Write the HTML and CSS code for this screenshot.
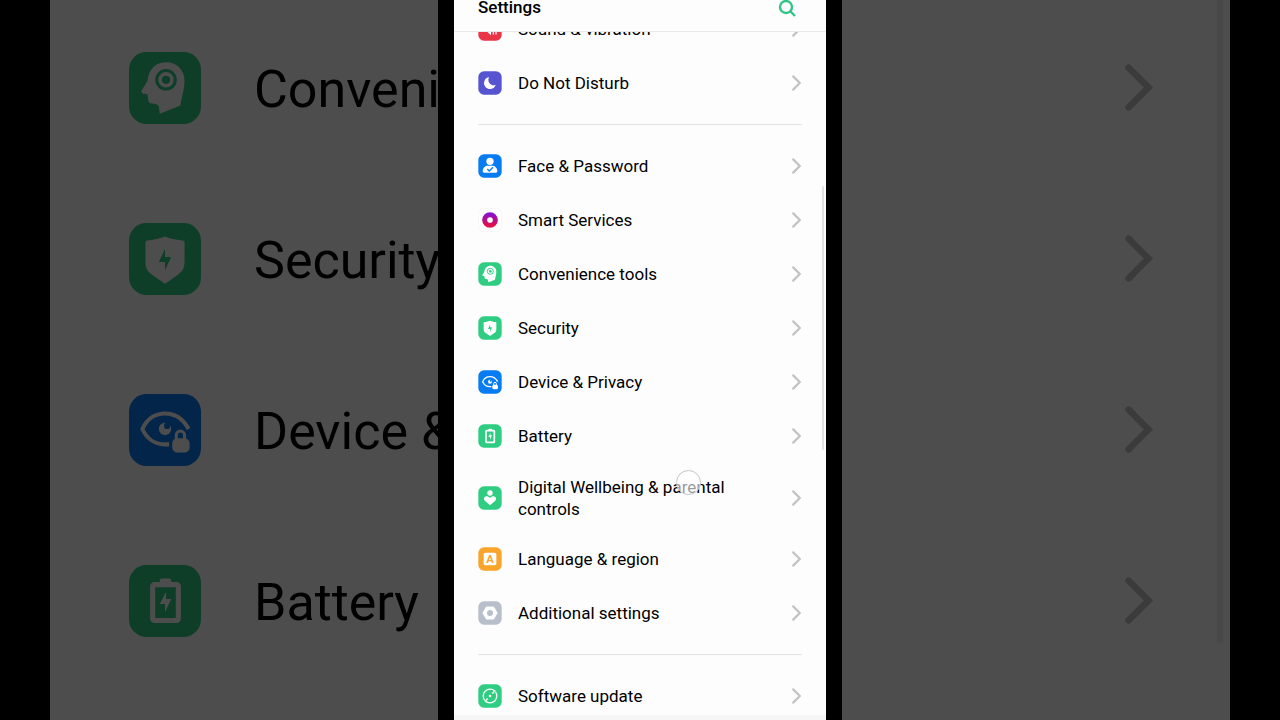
FILE: index.html
```html
<!DOCTYPE html>
<html lang="en">
<head>
    <meta charset="UTF-8">
    <meta name="viewport" content="width=device-width, initial-scale=1.0">
    <title>Settings</title>
    <link rel="stylesheet" href="styles.css">
</head>
<body>
    <!-- icon sprite -->
    <svg class="sprite" aria-hidden="true">
        <defs>
            <linearGradient id="ring" x1="0" y1="0" x2="0" y2="1">
                <stop offset="0" stop-color="#8a12c8"/>
                <stop offset="1" stop-color="#e0104a"/>
            </linearGradient>
        </defs>
        <symbol id="sound" viewBox="0 0 72 72">
            <rect x="1" y="1" width="70" height="70" rx="17" fill="#ea3447"/>
            <path d="M17 29h9l13-12v38L26 43h-9z" fill="#fff"/>
            <path d="M46 26v25M54 20v31" stroke="#fff" stroke-width="4" stroke-linecap="round"/>
        </symbol>
        <symbol id="moon" viewBox="0 0 72 72">
            <rect x="1" y="1" width="70" height="70" rx="17" fill="#5654d0"/>
            <path d="M33 18C24 20 18 27 18 36c0 10 8 18 18 18c8 0 15-5 17-13c-4 2-9 2-13 0c-8-4-11-14-7-23z" fill="#fff"/>
        </symbol>
        <symbol id="face" viewBox="0 0 72 72">
            <rect x="1" y="1" width="70" height="70" rx="17" fill="#077bf2"/>
            <circle cx="36" cy="22" r="11" fill="#fff"/>
            <path d="M14 52c0-11 8-17 16-17h12c8 0 16 6 16 17c0 3-2 4-4 4H18c-2 0-4-1-4-4z" fill="#fff"/>
            <path d="M28 45l6 6l11-11" fill="none" stroke="#077bf2" stroke-width="4"/>
        </symbol>
        <symbol id="smart" viewBox="0 0 72 72">
            <rect x="1" y="1" width="70" height="70" rx="17" fill="#fff" stroke="#f1eef3" stroke-width="2"/>
            <circle cx="36" cy="36" r="16" fill="none" stroke="url(#ring)" stroke-width="15"/>
        </symbol>
        <symbol id="head" viewBox="0 0 72 72">
            <rect x="1" y="1" width="70" height="70" rx="17" fill="#2fcd82"/>
            <path d="M37 11C27 11 20 18 19 29l-6 10c0 2 1 3 6 3l1 7c1 3 5 2 8 3c3 1 2 5 3 9l20-8c1-8 4-15 4-24c0-11-8-18-18-18z" fill="#fff"/>
            <circle cx="37" cy="28" r="9" fill="none" stroke="#2fcd82" stroke-width="3"/>
            <circle cx="37" cy="28" r="4" fill="#2fcd82"/>
        </symbol>
        <symbol id="shield" viewBox="0 0 72 72">
            <rect x="1" y="1" width="70" height="70" rx="17" fill="#2fcd82"/>
            <path d="M36 14c7 3 13 3 17 4c2 0 2 1 2 3v17c0 6-1 9-6 13L36 60L23 51c-5-4-6-7-6-13V21c0-2 0-3 2-3c4-1 10-1 17-4z" fill="#fff"/>
            <path d="M36 26L30 39h6v8l6-13h-6z" fill="#2fcd82"/>
        </symbol>
        <symbol id="eye" viewBox="0 0 72 72">
            <rect x="1" y="1" width="70" height="70" rx="17" fill="#077bf2"/>
            <path d="M59 35C54 26 46 20 36 20S18 26 14 35c4 9 12 15 22 15h4" fill="none" stroke="#fff" stroke-width="4"/>
            <circle cx="36" cy="35" r="6" fill="#fff"/>
            <circle cx="38" cy="32" r="3" fill="#077bf2"/>
            <rect x="43" y="44" width="17" height="14" rx="5" fill="#fff"/>
            <path d="M47 45v-4a4 4 0 0 1 8 0v4" fill="none" stroke="#fff" stroke-width="3"/>
        </symbol>
        <symbol id="battery" viewBox="0 0 72 72">
            <rect x="1" y="1" width="70" height="70" rx="17" fill="#2fcd82"/>
            <rect x="31" y="14" width="11" height="6" rx="2" fill="#fff"/>
            <rect x="24" y="20" width="25" height="35" rx="2" fill="none" stroke="#fff" stroke-width="5"/>
            <path d="M37 27L31 39h5v8l6-13h-5z" fill="#fff"/>
        </symbol>
        <symbol id="heart" viewBox="0 0 72 72">
            <rect x="1" y="1" width="70" height="70" rx="17" fill="#2fcd82"/>
            <circle cx="36" cy="21" r="8" fill="#fff"/>
            <path d="M36 58L22 46c-5-4-5-10-2-13c4-4 11-3 16 3c5-6 12-7 16-3c3 3 3 9-2 13z" fill="#fff"/>
        </symbol>
        <symbol id="language" viewBox="0 0 72 72">
            <rect x="1" y="1" width="70" height="70" rx="17" fill="#f9a42a"/>
            <rect x="17" y="17" width="38" height="38" rx="5" fill="#fff"/>
            <text x="36" y="48" text-anchor="middle" class="icon-letter">A</text>
        </symbol>
        <symbol id="hexagon" viewBox="0 0 72 72">
            <rect x="1" y="1" width="70" height="70" rx="17" fill="#b8bfcb"/>
            <path d="M26 19h20l10 17l-10 17H26L16 36z" fill="#fff" stroke="#fff" stroke-width="5" stroke-linejoin="round"/>
            <circle cx="36" cy="36" r="9" fill="#b8bfcb"/>
        </symbol>
        <symbol id="update" viewBox="0 0 72 72">
            <rect x="1" y="1" width="70" height="70" rx="17" fill="#2fcd82"/>
            <g fill="none" stroke="#fff" stroke-width="4">
                <path d="M20 49A21 21 0 0 1 50 20L43 29"/>
                <path d="M52 23A21 21 0 0 1 22 52L29 43"/>
            </g>
            <circle cx="36" cy="36" r="4" fill="#fff"/>
        </symbol>
        <symbol id="chevron" viewBox="0 0 10 16">
            <path d="M2 2l6 6l-6 6" fill="none" stroke="#c3c3c5" stroke-width="2" stroke-linecap="round"/>
        </symbol>
    </svg>

    <div class="backdrop" aria-hidden="true">
        <div class="big-row">
            <svg class="big-icon"><use href="#head"/></svg>
            <span class="big-label">Convenience tools</span>
            <svg class="big-chevron"><use href="#chevron"/></svg>
        </div>
        <div class="big-row">
            <svg class="big-icon"><use href="#shield"/></svg>
            <span class="big-label">Security</span>
            <svg class="big-chevron"><use href="#chevron"/></svg>
        </div>
        <div class="big-row">
            <svg class="big-icon"><use href="#eye"/></svg>
            <span class="big-label">Device &amp; Privacy</span>
            <svg class="big-chevron"><use href="#chevron"/></svg>
        </div>
        <div class="big-row">
            <svg class="big-icon"><use href="#battery"/></svg>
            <span class="big-label">Battery</span>
            <svg class="big-chevron"><use href="#chevron"/></svg>
        </div>
        <div class="big-scrollbar"></div>
    </div>

    <div class="phone">
        <div class="screen">
            <header class="topbar">
                <h1>Settings</h1>
                <button type="button" class="search" aria-label="Search">
                    <svg viewBox="0 0 18 18"><circle cx="8" cy="7" r="6"/><path d="M12 11l5 5"/></svg>
                </button>
            </header>

            <main class="list">
                <ul>
                    <li><a class="row" href="#"><svg class="icon"><use href="#sound"/></svg><span class="label">Sound &amp; vibration</span><svg class="chevron"><use href="#chevron"/></svg></a></li>
                    <li><a class="row" href="#"><svg class="icon"><use href="#moon"/></svg><span class="label">Do Not Disturb</span><svg class="chevron"><use href="#chevron"/></svg></a></li>
                </ul>
                <ul>
                    <li><a class="row" href="#"><svg class="icon"><use href="#face"/></svg><span class="label">Face &amp; Password</span><svg class="chevron"><use href="#chevron"/></svg></a></li>
                    <li><a class="row" href="#"><svg class="icon"><use href="#smart"/></svg><span class="label">Smart Services</span><svg class="chevron"><use href="#chevron"/></svg></a></li>
                    <li><a class="row" href="#"><svg class="icon"><use href="#head"/></svg><span class="label">Convenience tools</span><svg class="chevron"><use href="#chevron"/></svg></a></li>
                    <li><a class="row" href="#"><svg class="icon"><use href="#shield"/></svg><span class="label">Security</span><svg class="chevron"><use href="#chevron"/></svg></a></li>
                    <li><a class="row" href="#"><svg class="icon"><use href="#eye"/></svg><span class="label">Device &amp; Privacy</span><svg class="chevron"><use href="#chevron"/></svg></a></li>
                    <li><a class="row" href="#"><svg class="icon"><use href="#battery"/></svg><span class="label">Battery</span><svg class="chevron"><use href="#chevron"/></svg></a></li>
                    <li><a class="row row-tall" href="#"><svg class="icon"><use href="#heart"/></svg><span class="label">Digital Wellbeing &amp; parental controls</span><svg class="chevron"><use href="#chevron"/></svg></a></li>
                    <li><a class="row" href="#"><svg class="icon"><use href="#language"/></svg><span class="label">Language &amp; region</span><svg class="chevron"><use href="#chevron"/></svg></a></li>
                    <li><a class="row" href="#"><svg class="icon"><use href="#hexagon"/></svg><span class="label">Additional settings</span><svg class="chevron"><use href="#chevron"/></svg></a></li>
                </ul>
                <ul>
                    <li><a class="row" href="#"><svg class="icon"><use href="#update"/></svg><span class="label">Software update</span><svg class="chevron"><use href="#chevron"/></svg></a></li>
                </ul>
            </main>

            <div class="scrollbar"></div>
            <div class="touch"></div>
            <div class="navbar"></div>
        </div>
    </div>
</body>
</html>
```
FILE: styles.css
```css
* {
    box-sizing: border-box;
}
body {
    margin: 0;
    height: 100vh;
    overflow: hidden;
    position: relative;
    display: flex;
    justify-content: center;
    background: #000;
    color: #000;
    font-family: Roboto, "Liberation Sans", sans-serif;
}
.sprite {
    position: absolute;
    width: 0;
    height: 0;
}
.icon-letter {
    font: 700 34px Roboto, sans-serif;
    fill: #f9a42a;
}

/* enlarged, dimmed copy of the list behind the phone */
.backdrop {
    position: absolute;
    inset: 0 50px;
    padding: 2px 75px 0 78px;
    overflow: hidden;
    background: #fff;
    opacity: 0.3;
}
.big-row {
    display: flex;
    align-items: center;
    height: 171px;
}
.big-icon {
    flex: none;
    width: 74px;
    height: 74px;
    margin-right: 52px;
}
.big-label {
    flex: 1;
    padding-top: 4px;
    font-size: 52px;
    white-space: nowrap;
}
.big-chevron {
    width: 33px;
    height: 53px;
}
.big-scrollbar {
    position: absolute;
    top: 0;
    right: 7px;
    width: 6px;
    height: 643px;
    border-radius: 0 0 3px 3px;
    background: #eee;
}

.phone {
    position: relative;
    width: 100%;
    max-width: 404px;
    padding: 0 16px;
    background: #000;
}
.screen {
    position: relative;
    height: 100%;
    overflow: hidden;
    background: #fdfdfd;
}
.topbar {
    position: absolute;
    z-index: 1;
    top: 0;
    left: 0;
    right: 0;
    height: 32px;
    padding: 0 30px 0 24px;
    display: flex;
    justify-content: space-between;
    align-items: flex-start;
    background: #fdfdfd;
    border-bottom: 1px solid #e8e8e8;
}
h1 {
    margin: 0;
    font-size: 17px;
    font-weight: 500;
    line-height: 14px;
}
.search {
    width: 18px;
    height: 18px;
    padding: 0;
    border: none;
    background: none;
    cursor: pointer;
}
.search svg {
    display: block;
    width: 18px;
    height: 18px;
    fill: none;
    stroke: #2fc587;
    stroke-width: 2.4;
}

.list {
    padding: 2px 24px 0;
}
ul {
    list-style: none;
    margin: 0;
    padding: 0;
}
ul + ul {
    margin-top: 14px;
    padding-top: 14px;
    border-top: 1px solid #e3e3e3;
}
.row {
    display: flex;
    align-items: center;
    min-height: 54px;
    color: inherit;
    text-decoration: none;
}
.row-tall {
    min-height: 69px;
}
.icon {
    flex: none;
    width: 24px;
    height: 24px;
    margin-right: 16px;
}
.label {
    flex: 1;
    padding-right: 40px;
    font-size: 17px;
    line-height: 22px;
}
.chevron {
    flex: none;
    width: 11px;
    height: 18px;
}

.scrollbar {
    position: absolute;
    top: 186px;
    right: 2px;
    width: 2px;
    height: 264px;
    border-radius: 1px;
    background: #e2e2e2;
}
.touch {
    position: absolute;
    top: 470px;
    left: 222px;
    width: 25px;
    height: 25px;
    border: 1px solid #c4c4d0;
    border-radius: 50%;
    background: rgba(255, 255, 255, 0.6);
}
.navbar {
    position: absolute;
    bottom: 0;
    left: 0;
    right: 0;
    height: 5px;
    background: #f6f6f6;
}
```
